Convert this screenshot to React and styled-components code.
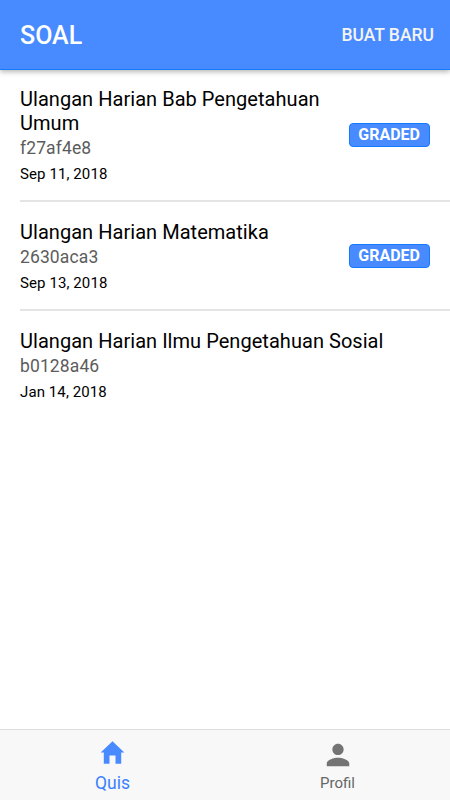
import styled, { createGlobalStyle } from 'styled-components';
import { IoMdPerson } from 'react-icons/io';

const quizzes = [
  {
    id: 'f27af4e8',
    title: 'Ulangan Harian Bab Pengetahuan Umum',
    date: 'Sep 11, 2018',
    graded: true,
  },
  {
    id: '2630aca3',
    title: 'Ulangan Harian Matematika',
    date: 'Sep 13, 2018',
    graded: true,
  },
  {
    id: 'b0128a46',
    title: 'Ulangan Harian Ilmu Pengetahuan Sosial',
    date: 'Jan 14, 2018',
    graded: false,
  },
];

function QuizItem({ quiz }) {
  return (
    <StyledItem>
      <ItemText>
        <ItemTitle>{quiz.title}</ItemTitle>
        <ItemCode>{quiz.id}</ItemCode>
        <ItemDate>{quiz.date}</ItemDate>
      </ItemText>
      {quiz.graded && <Badge>GRADED</Badge>}
    </StyledItem>
  );
}

function App() {
  return (
    <Page>
      <GlobalStyle />
      <Header>
        <HeaderTitle>SOAL</HeaderTitle>
        <HeaderButton>BUAT BARU</HeaderButton>
      </Header>
      <List>
        {quizzes.map((quiz) => (
          <QuizItem key={quiz.id} quiz={quiz} />
        ))}
      </List>
      <TabBar>
        <Tab $active>
          <HomeIcon viewBox="0 0 30 30">
            <path d="M14.5 3.3 26.3 14.6h-3.1v11.1h-5.7v-8.2h-6v8.2H5.8V14.6H2.7z" />
          </HomeIcon>
          <TabLabel $active>Quis</TabLabel>
        </Tab>
        <Tab>
          <PersonIcon />
          <TabLabel>Profil</TabLabel>
        </Tab>
      </TabBar>
    </Page>
  );
}

export default App;

const GlobalStyle = createGlobalStyle`
  * {
    box-sizing: border-box;
  }

  body {
    margin: 0;
    font-family: Roboto, 'Liberation Sans', sans-serif;
    background: #fff;
  }
`;

const Page = styled.div`
  display: flex;
  flex-direction: column;
  height: 100vh;
`;

const Header = styled.header`
  display: flex;
  flex: none;
  align-items: center;
  justify-content: space-between;
  height: 70px;
  padding: 1px 16px 0 20px;
  border-bottom: 1px solid #127bff;
  color: #fff;
  background: #488aff;
  box-shadow: 0 2px 5px rgba(0, 0, 0, 0.28);
`;

const HeaderTitle = styled.h1`
  margin: 0;
  padding-top: 1px;
  font-size: 25px;
  font-weight: 500;
`;

const HeaderButton = styled.button`
  padding: 0;
  border: 0;
  color: #f4f4f4;
  background: none;
  font-family: inherit;
  font-size: 17.5px;
  font-weight: 500;
`;

const List = styled.ul`
  flex: 1;
  margin: 0;
  padding: 0;
  list-style: none;
`;

const StyledItem = styled.li`
  display: flex;
  align-items: center;
  margin-left: 20px;
  padding: 18px 20px 13px 0;

  &:first-child {
    padding-top: 17px;
  }

  & + & {
    border-top: 2px solid #e4e4e4;
  }
`;

const ItemText = styled.div`
  flex: 1;
  padding-right: 20px;
`;

const ItemTitle = styled.h2`
  margin: 0;
  font-size: 20px;
  font-weight: 400;
  line-height: 24px;
  letter-spacing: 0.04px;
`;

const ItemCode = styled.p`
  margin: 0;
  color: #5c5c5c;
  font-size: 17.5px;
  font-weight: 400;
  line-height: 26px;
  letter-spacing: 0.12px;
`;

const ItemDate = styled.p`
  margin: 0;
  font-size: 15px;
  font-weight: 400;
  line-height: 26px;
  letter-spacing: 0.1px;
`;

const Badge = styled.span`
  margin-bottom: 5px;
  padding: 0 9px 0 8px;
  border: 1px solid #127bff;
  border-radius: 4px;
  color: #fff;
  background: #488aff;
  font-size: 16px;
  font-weight: 700;
  line-height: 22px;
`;

const TabBar = styled.nav`
  display: flex;
  flex: none;
  height: 71px;
  border-top: 1px solid #dedede;
  background: #f8f8f8;
`;

const Tab = styled.a`
  display: flex;
  flex: 1;
  flex-direction: column;
  align-items: center;
  padding-top: ${({ $active }) => ($active ? '8px' : '10px')};
  color: ${({ $active }) => ($active ? '#488aff' : '#747474')};
`;

const HomeIcon = styled.svg`
  width: 30px;
  height: 30px;
  fill: currentColor;
`;

const PersonIcon = styled(IoMdPerson)`
  width: 30px;
  height: 30px;
`;

const TabLabel = styled.span`
  color: ${({ $active }) => ($active ? '#3a80ff' : '#666')};
  font-size: ${({ $active }) => ($active ? '17.5px' : '15px')};
  line-height: ${({ $active }) => ($active ? '30px' : '27px')};
`;
